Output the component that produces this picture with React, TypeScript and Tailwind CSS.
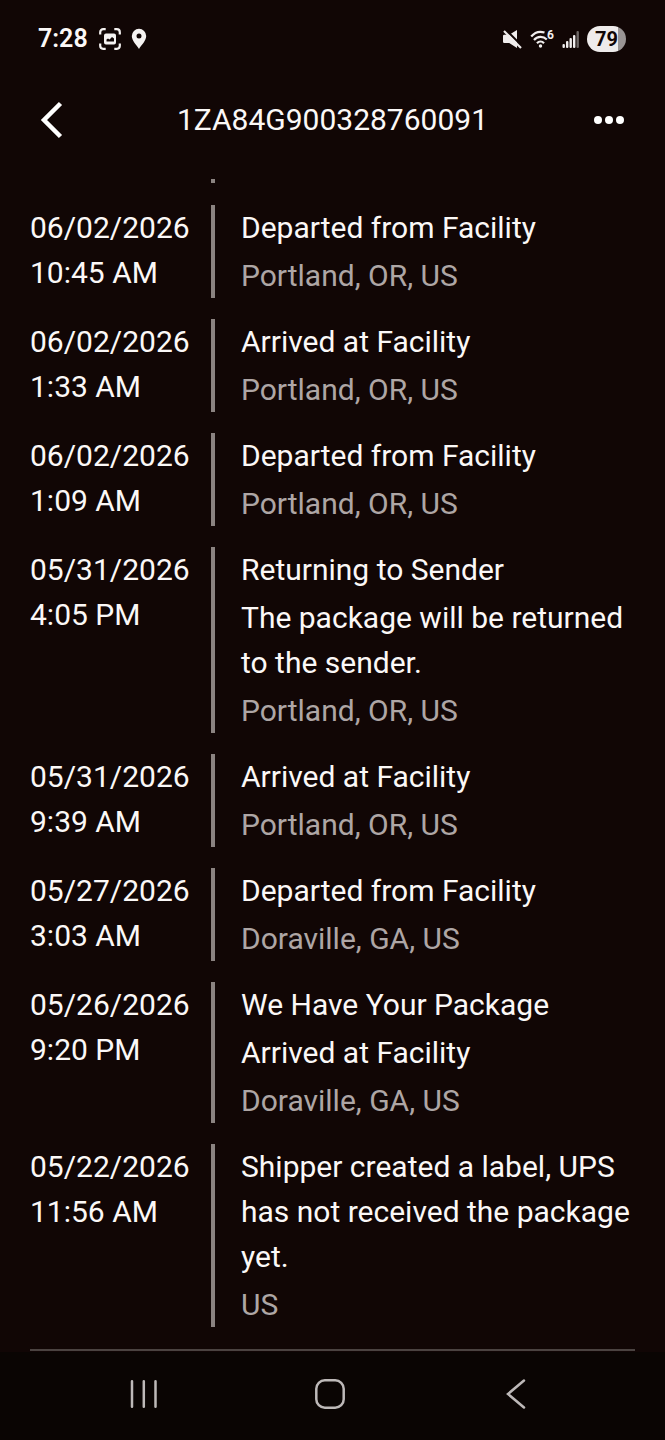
interface TrackingEvent {
  date: string
  time: string
  title: string
  details?: string
  location: string
}

const trackingNumber = '1ZA84G900328760091'

const events: TrackingEvent[] = [
  { date: '06/02/2026', time: '10:45 AM', title: 'Departed from Facility', location: 'Portland, OR, US' },
  { date: '06/02/2026', time: '1:33 AM', title: 'Arrived at Facility', location: 'Portland, OR, US' },
  { date: '06/02/2026', time: '1:09 AM', title: 'Departed from Facility', location: 'Portland, OR, US' },
  {
    date: '05/31/2026',
    time: '4:05 PM',
    title: 'Returning to Sender',
    details: 'The package will be returned to the sender.',
    location: 'Portland, OR, US',
  },
  { date: '05/31/2026', time: '9:39 AM', title: 'Arrived at Facility', location: 'Portland, OR, US' },
  { date: '05/27/2026', time: '3:03 AM', title: 'Departed from Facility', location: 'Doraville, GA, US' },
  {
    date: '05/26/2026',
    time: '9:20 PM',
    title: 'We Have Your Package',
    details: 'Arrived at Facility',
    location: 'Doraville, GA, US',
  },
  {
    date: '05/22/2026',
    time: '11:56 AM',
    title: 'Shipper created a label, UPS has not received the package yet.',
    location: 'US',
  },
]

function StatusBar() {
  return (
    <div className="flex h-[78px] items-center justify-between pl-[38px] pr-[39px]">
      <div className="flex items-center gap-[11px]">
        <span className="text-[25px] font-semibold">7:28</span>
        <div className="flex items-center gap-2.5">
          {/* Screen capture */}
          <svg width="22" height="22" viewBox="0 0 22 22" fill="none" aria-hidden="true">
            <path
              d="M1.200 6.500V4.200a3 3 0 0 1 3-3h2.500M15.300 1.200h2.500a3 3 0 0 1 3 3v2.300M20.800 15.500v2.300a3 3 0 0 1-3 3h-2.500M6.700 20.800H4.200a3 3 0 0 1-3-3v-2.300"
              stroke="#f5f2f1"
              strokeWidth="2.200"
            />
            <path
              fillRule="evenodd"
              fill="#f5f2f1"
              d="M7 5.500h8a2 2 0 0 1 2 2v7a2 2 0 0 1-2 2H7a2 2 0 0 1-2-2v-7a2 2 0 0 1 2-2zM7.500 13.500h7.500v-3L13 9l-2.500 2.500L9 10.500l-1.500 1z"
            />
          </svg>
          {/* Location */}
          <svg width="16" height="22" viewBox="0 0 16 22" aria-hidden="true">
            <path
              fillRule="evenodd"
              fill="#f5f2f1"
              d="M8 .8a7.200 7.200 0 0 1 7.200 7.200c0 5-5 9-7.200 13C5.800 17 .8 13 .8 8A7.200 7.200 0 0 1 8 .8zm0 4.800a2.500 2.500 0 1 0 0 5 2.500 2.500 0 0 0 0-5z"
            />
          </svg>
        </div>
      </div>

      <div className="flex items-center gap-[7px]">
        {/* Sound off */}
        <svg width="20" height="22" viewBox="0 0 20 22" aria-hidden="true">
          <path fill="#f0eded" d="M1 8a1.200 1.200 0 0 1 1.200-1.200h5L15 2v18l-7.800-5H2.200A1.200 1.200 0 0 1 1 13.800z" />
          <path d="M3.500 1.500 20 18" stroke="#110605" strokeWidth="2" />
          <path d="M2 3 19 20" stroke="#f0eded" strokeWidth="2.200" />
        </svg>
        {/* Wi-Fi 6 */}
        <svg width="26" height="20" viewBox="0 0 26 20" fill="none" aria-hidden="true">
          <g stroke="#f0eded" strokeWidth="2.200">
            <path d="M2.200 7.500C5.800 3.200 11 2 15.500 3.500" />
            <path d="M5 11c3.400-4 9-4.200 12.800-.5" />
            <path d="M8 14.200c2-2.300 5-2.300 7 0" />
          </g>
          <circle cx="11.500" cy="17" r="1.700" fill="#f0eded" />
          <text x="18" y="9.500" fill="#f0eded" fontFamily="Roboto, sans-serif" fontSize="12" fontWeight="700">6</text>
        </svg>
        {/* Signal */}
        <svg width="18" height="20" viewBox="0 0 18 20" fill="#f0eded" aria-hidden="true">
          <rect x="0.500" y="15" width="2.400" height="4" rx="1" />
          <rect x="4" y="12" width="2.400" height="7" rx="1" />
          <rect x="7.500" y="9" width="2.400" height="10" rx="1" />
          <rect x="11" y="6" width="2.400" height="13" rx="1" />
          <rect x="14.500" y="2" width="2.400" height="17" rx="1" fill="#6f6867" />
        </svg>
        <span className="flex h-[26px] w-[39px] items-center justify-center rounded-full bg-linear-to-r from-[#eeebeb] from-80% to-[#999494] to-80% text-xl font-bold text-[#110605]">
          79
        </span>
      </div>
    </div>
  )
}

function Header() {
  return (
    <header className="flex h-[83px] items-center justify-between px-10">
      <button type="button" aria-label="Back" className="w-8">
        <svg width="24" height="38" viewBox="0 0 24 38" fill="none">
          <path d="M20.500 2.500 4 19l16.500 16.500" stroke="#ffffff" strokeWidth="4.500" />
        </svg>
      </button>
      <h1 className="text-[30px] leading-[45px]">{trackingNumber}</h1>
      <button type="button" aria-label="More options" className="flex w-8 justify-end">
        <svg width="32" height="10" viewBox="0 0 32 10" fill="#ffffff">
          <circle cx="5" cy="5" r="4" />
          <circle cx="16" cy="5" r="4" />
          <circle cx="27" cy="5" r="4" />
        </svg>
      </button>
    </header>
  )
}

function EventRow({ event }: { event: TrackingEvent }) {
  return (
    <li className="flex text-[30px] leading-[45px]">
      <div className="w-[181px] shrink-0">
        <p>{event.date}</p>
        <p>{event.time}</p>
      </div>
      <div className="flex min-w-0 flex-1 flex-col gap-[3px] border-l-4 border-[#8b8381] pl-[26px]">
        <p>{event.title}</p>
        {event.details && <p>{event.details}</p>}
        <p className="text-[#aea6a5]">{event.location}</p>
      </div>
    </li>
  )
}

function NavBar() {
  return (
    <nav className="mt-auto grid h-[88px] grid-cols-3 items-center justify-items-center bg-[#0a0503] pb-1 pl-[51px] pr-14">
      <button type="button" aria-label="Recent apps">
        <svg width="30" height="30" viewBox="0 0 30 30" stroke="#bdb9b8" strokeWidth="2.500" strokeLinecap="round">
          <path d="M3 2.200v25.600M14.800 2.200v25.600M26.500 2.200v25.600" />
        </svg>
      </button>
      <button type="button" aria-label="Home">
        <svg width="32" height="32" viewBox="0 0 32 32" fill="none">
          <rect x="2.300" y="2.300" width="27.400" height="27.400" rx="8.500" stroke="#bdb9b8" strokeWidth="2.500" />
        </svg>
      </button>
      <button type="button" aria-label="Back">
        <svg width="20" height="32" viewBox="0 0 20 32" fill="none">
          <path d="M18 2.500 2 16l16 13.500" stroke="#bdb9b8" strokeWidth="2.500" strokeLinecap="round" />
        </svg>
      </button>
    </nav>
  )
}

export default function App() {
  return (
    <div className="flex min-h-screen flex-col bg-[#110605] font-[Roboto,sans-serif] text-[#fbf8f7]">
      <StatusBar />
      <Header />
      <main className="px-[30px] pt-[18px]">
        <ol className="flex flex-col gap-[21px] border-b-2 border-[#4b4341] pb-[22px]">
          {/* Tail of the newer event scrolled under the header */}
          <li className="h-[5px] pl-[181px]" aria-hidden="true">
            <div className="size-1 bg-[#8b8381]" />
          </li>
          {events.map((event) => (
            <EventRow key={`${event.date} ${event.time}`} event={event} />
          ))}
        </ol>
      </main>
      <NavBar />
    </div>
  )
}
